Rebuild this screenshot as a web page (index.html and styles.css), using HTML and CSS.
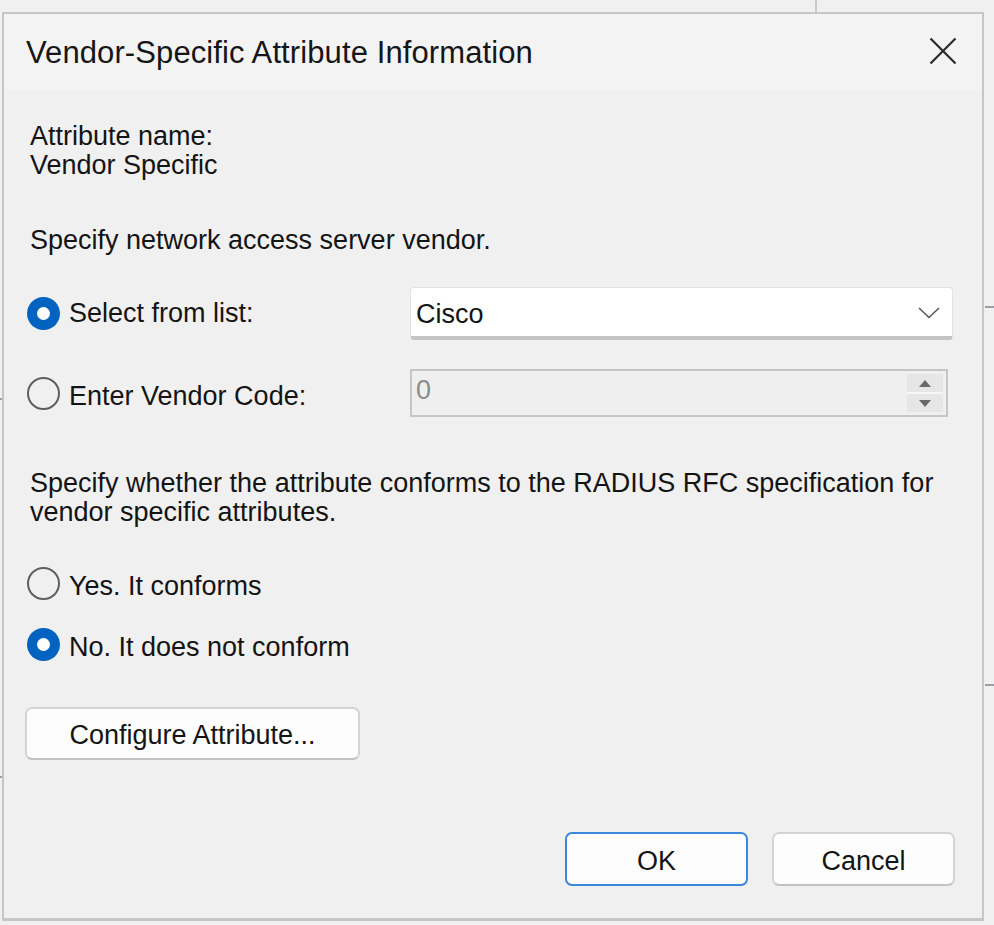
FILE: index.html
```html
<!DOCTYPE html>
<html lang="en">
<head>
<meta charset="utf-8">
<title>Vendor-Specific Attribute Information</title>
<link rel="stylesheet" href="styles.css">
</head>
<body>
<div class="desk">
  <span class="bg-line top-v"></span>
  <span class="bg-line right-h1"></span>
  <span class="bg-line right-h2"></span>
  <span class="bg-line left-t1"></span>
  <span class="bg-line left-t2"></span>

  <div class="dialog">
    <div class="titlebar">
      <span class="title">Vendor-Specific Attribute Information</span>
      <span class="close" aria-label="Close">
        <svg width="28" height="28" viewBox="0 0 28 28"><path d="M1.5 1.5 L26.5 26.5 M26.5 1.5 L1.5 26.5" stroke="#2b2b2b" stroke-width="2.2" fill="none"/></svg>
      </span>
    </div>

    <div class="content">
      <p class="text info">Attribute name:<br>Vendor Specific</p>
      <p class="text prompt">Specify network access server vendor.</p>

      <div class="vendor-grid">
        <label class="radio"><span class="dot checked"></span><span>Select from list:</span></label>
        <div class="select">
          <span>Cisco</span>
          <svg class="chev" width="22" height="12" viewBox="0 0 22 12"><path d="M1 1 L11 10.5 L21 1" stroke="#5a5a5a" stroke-width="1.6" fill="none"/></svg>
        </div>
        <label class="radio second"><span class="dot"></span><span>Enter Vendor Code:</span></label>
        <div class="spin">
          <span class="spin-val">0</span>
          <span class="spin-btns">
            <span class="spin-btn"><svg width="12" height="7" viewBox="0 0 12 7"><path d="M6 0 L12 7 L0 7 Z" fill="#6a6a6a"/></svg></span>
            <span class="spin-btn"><svg width="12" height="7" viewBox="0 0 12 7"><path d="M0 0 L12 0 L6 7 Z" fill="#6a6a6a"/></svg></span>
          </span>
        </div>
      </div>

      <p class="text prompt2">Specify whether the attribute conforms to the RADIUS RFC specification for vendor specific attributes.</p>

      <div class="radio-list">
        <label class="radio"><span class="dot"></span><span>Yes. It conforms</span></label>
        <label class="radio"><span class="dot checked"></span><span>No. It does not conform</span></label>
      </div>

      <button class="btn configure">Configure Attribute...</button>

      <div class="actions">
        <button class="btn ok">OK</button>
        <button class="btn">Cancel</button>
      </div>
    </div>
  </div>
</div>
</body>
</html>
```
FILE: styles.css
```css
* { box-sizing: border-box; }

html, body {
  margin: 0;
  padding: 0;
  background: #f0f0f0;
}

body {
  width: 994px;
  height: 925px;
  overflow: hidden;
  font-family: "Liberation Sans", Arial, sans-serif;
  color: #141414;
}

.desk {
  position: relative;
  width: 994px;
  height: 925px;
  padding: 12px 10px 0 2px;
  background: #f0f0f0;
}

.bg-line {
  position: absolute;
  display: block;
}
.top-v { left: 815px; top: 0; width: 2px; height: 13px; background: #c8c8c8; }
.right-h1 { left: 985px; top: 306px; width: 9px; height: 2px; background: #9aa0a8; }
.right-h2 { left: 985px; top: 684px; width: 9px; height: 2px; background: #9aa0a8; }
.left-t1 { left: 0; top: 398px; width: 2px; height: 2px; background: #9aa0a8; }
.left-t2 { left: 0; top: 776px; width: 2px; height: 2px; background: #9aa0a8; }

.dialog {
  width: 982px;
  height: 909px;
  border: 2px solid #c6c6c6;
  border-bottom-width: 3px;
  background: #f0f0f0;
  display: flex;
  flex-direction: column;
}

.titlebar {
  height: 76px;
  background: #f3f3f3;
  display: flex;
  justify-content: space-between;
  align-items: flex-start;
  padding: 21px 25px 0 22px;
}

.title {
  font-size: 31px;
  line-height: 36px;
  color: #161616;
  letter-spacing: 0.1px;
}

.close {
  display: block;
  width: 28px;
  height: 28px;
  margin-top: 2px;
}
.close svg { display: block; }

.content {
  flex: 1;
  display: flex;
  flex-direction: column;
  align-items: flex-start;
  padding: 0 27px 0 23px;
}

.text {
  margin: 0;
  padding-left: 3px;
  font-size: 27px;
  line-height: 29px;
}

.info { margin-top: 32px; }
.prompt { margin-top: 46px; }
.prompt2 { margin-top: 52px; width: 100%; }

.vendor-grid {
  margin-top: 32px;
  display: grid;
  grid-template-columns: 383px 543px;
  grid-template-rows: 53px 48px;
  row-gap: 29px;
  align-items: center;
}

.radio {
  display: flex;
  align-items: center;
  gap: 9px;
  font-size: 27px;
  line-height: 29px;
}
.radio.second span:last-child { padding-top: 6px; }

.dot {
  width: 33px;
  height: 33px;
  border-radius: 50%;
  border: 2px solid #5f5f5f;
  flex: none;
  display: flex;
  align-items: center;
  justify-content: center;
}
.dot.checked {
  border: none;
  background: #0063c0;
}
.dot.checked::after {
  content: "";
  width: 13px;
  height: 13px;
  border-radius: 50%;
  background: #ffffff;
}

.select {
  height: 53px;
  width: 543px;
  background: #ffffff;
  border: 1px solid #e2e2e2;
  border-bottom: 4px solid #c4c4c4;
  border-radius: 4px;
  display: flex;
  align-items: center;
  justify-content: space-between;
  padding: 0 12px 0 5px;
  font-size: 27px;
  line-height: 29px;
}
.select span { padding-top: 4px; }
.chev { display: block; margin-top: 2px; }

.spin {
  height: 48px;
  width: 538px;
  border: 2px solid #c6c6c6;
  background: #efefef;
  display: flex;
  align-items: stretch;
  justify-content: space-between;
}
.spin-val {
  font-size: 27px;
  line-height: 29px;
  color: #8c8c8c;
  padding: 5px 0 0 4px;
}
.spin-btns {
  width: 36px;
  display: flex;
  flex-direction: column;
  margin: 3px 3px 3px 0;
  gap: 2px;
  background: #f6f6f6;
}
.spin-btn {
  flex: 1;
  background: #e6e6e6;
  display: flex;
  align-items: center;
  justify-content: center;
}
.spin-btn svg { display: block; }

.radio-list {
  margin-top: 40px;
  display: flex;
  flex-direction: column;
  gap: 28px;
}
.radio-list .radio { height: 33px; }
.radio-list .radio span:last-child { padding-top: 5px; }

.btn {
  font-family: "Liberation Sans", Arial, sans-serif;
  font-size: 27px;
  line-height: 29px;
  color: #141414;
  background: #fdfdfd;
  border: 2px solid #d4d4d4;
  border-bottom-color: #c2c2c2;
  border-radius: 7px;
  padding: 4px 0 0 0;
  cursor: default;
}

.configure {
  margin-top: 46px;
  margin-left: -2px;
  width: 335px;
  height: 53px;
}

.actions {
  margin-top: 72px;
  align-self: flex-end;
  display: flex;
  gap: 24px;
}
.actions .btn {
  width: 183px;
  height: 54px;
}
.btn.ok {
  border: 2px solid #3d86de;
}
```
